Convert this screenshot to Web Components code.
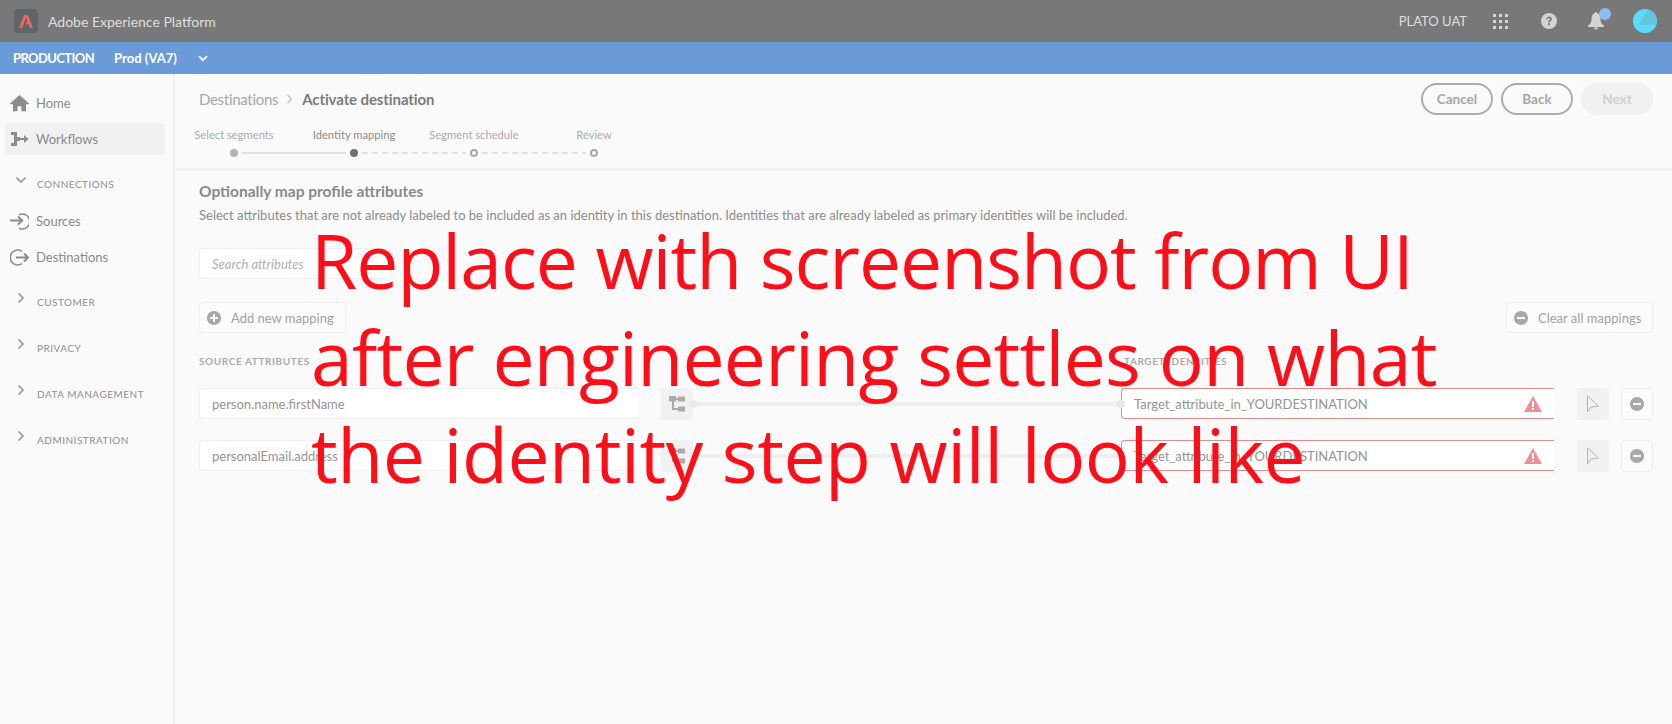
<!DOCTYPE html>
<html lang="en">
<head>
<meta charset="utf-8">
<title>Activate destination</title>
<style>
  html, body { margin: 0; height: 100%; }
  body { font-family: Lato, "Open Sans", sans-serif; background: #fafafa; overflow: hidden; }
</style>
</head>
<body>
<app-shell>
  <top-bar slot="top"></top-bar>
  <env-bar slot="top"></env-bar>
  <side-nav slot="side"></side-nav>
  <activate-page slot="main"></activate-page>
</app-shell>
<note-overlay>
  <div>Replace with screenshot from UI</div>
  <div style="letter-spacing: -.75px">after engineering settles on what</div>
  <div style="letter-spacing: -.45px">the identity step will look like</div>
</note-overlay>

<script>
const ICONS = {
  plus: '<circle cx="9" cy="9" r="8" fill="#a8a8a8"/><path d="M9 4.5v9M4.5 9h9" stroke="#fafafa" stroke-width="2.2"/>',
  minus: '<circle cx="9" cy="9" r="8" fill="#a8a8a8"/><path d="M4.5 9h9" stroke="#fafafa" stroke-width="2.4"/>',
  home: '<path d="M9.5 1 0 9.6c-.2.3 0 .6.3.6H3v7h4.6v-5h3.8v5H16v-7h2.700c.3 0 .5-.3.3-.6z" fill="#8c8c8c"/>',
  workflows: '<path d="M1 2h6v5h3v4H7v5H1v-3h3V5H1z" fill="#8c8c8c"/><path d="M10 8h4V5l4.500 4-4.500 4v-3h-4z" fill="#8c8c8c"/>',
  sources: '<path d="M8 3.200A7.500 7.500 0 1 1 8 16.800" fill="none" stroke="#8c8c8c" stroke-width="1.500" transform="translate(1 -.5)"/><path d="M0 8.500h12M8 4.600l4.200 3.900L8 12.400" fill="none" stroke="#8c8c8c" stroke-width="2"/>',
  destinations: '<path d="M12 3.300A7.500 7.500 0 1 0 12 15.700" fill="none" stroke="#8c8c8c" stroke-width="1.600"/><path d="M6 9.500h12M14 5.600l4.200 3.900-4.200 3.900" fill="none" stroke="#8c8c8c" stroke-width="2"/>'
};

class AppShell extends HTMLElement {
  constructor() {
    super();
    this.shadowDOM = this.attachShadow({ mode: 'open' });
  }

  connectedCallback() {
    this.shadowDOM.innerHTML = `
      <style>
        :host { display: flex; flex-direction: column; height: 724px; width: 1672px; }
        .body { display: flex; flex: 1; min-height: 0; }
        ::slotted([slot="main"]) { flex: 1; min-width: 0; }
      </style>
      <slot name="top"></slot>
      <div class="body">
        <slot name="side"></slot>
        <slot name="main"></slot>
      </div>
    `;
  }
}

class TopBar extends HTMLElement {
  constructor() {
    super();
    this.shadowDOM = this.attachShadow({ mode: 'open' });
  }

  connectedCallback() {
    this.shadowDOM.innerHTML = `
      <style>
        :host {
          display: flex;
          align-items: center;
          height: 42px;
          background: #787878;
          color: #dedede;
          font-size: 14px;
          padding: 0 15px 0 14px;
          box-sizing: border-box;
        }
        .logo {
          width: 24px;
          height: 24px;
          border-radius: 4px;
          background: #5f646b;
          display: flex;
          align-items: center;
          justify-content: center;
          margin-right: 10px;
        }
        .spacer { flex: 1; }
        .org { margin-right: 26px; font-size: 13px; }
        .grid {
          display: grid;
          grid-template-columns: repeat(3, 3px);
          gap: 3px;
          margin-right: 33px;
        }
        .grid i { width: 3px; height: 3px; background: #d4d4d4; }
        .help { margin-right: 31px; display: block; }
        .bell { position: relative; width: 16px; height: 18px; margin-right: 29px; }
        .bell svg { display: block; }
        .dot {
          position: absolute;
          left: 11px;
          top: -4px;
          width: 12px;
          height: 12px;
          border-radius: 50%;
          background: #8dbbf5;
        }
        .avatar { display: block; }
      </style>
      <div class="logo">
        <svg width="14" height="13" viewBox="0 0 14 13"><path d="M5 0h4l5 13h-3.100L9.600 9.300H6.700L8.400 6 7 2.400 3.200 13H0z" fill="#f2645c"/></svg>
      </div>
      <span>Adobe Experience Platform</span>
      <span class="spacer"></span>
      <span class="org">PLATO UAT</span>
      <div class="grid">${'<i></i>'.repeat(9)}</div>
      <svg class="help" width="16" height="16" viewBox="0 0 16 16">
        <circle cx="8" cy="8" r="8" fill="#d4d4d4"/>
        <path d="M5.300 6.200C5.400 4.600 6.500 3.600 8.200 3.600c1.600 0 2.700 1 2.700 2.300 0 2-2.100 2-2.100 3.500H7.100c0-2.300 2-2.300 2-3.400 0-.6-.4-1-1-1-.7 0-1.100.4-1.200 1.200z" fill="#787878"/>
        <rect x="7.100" y="10.300" width="1.800" height="1.900" fill="#787878"/>
      </svg>
      <div class="bell">
        <svg width="16" height="18" viewBox="0 0 16 18">
          <path d="M8 0c.7 0 1 .5 1 1.100C11.500 1.700 12.500 4 12.500 8c0 2.500 1 3.800 3.500 5.500V15H0v-1.500C2.500 11.800 3.500 10.500 3.500 8c0-4 1-6.300 3.500-6.900C7 .5 7.300 0 8 0z" fill="#d4d4d4"/>
          <path d="M6 15.500h4a2 2 0 0 1-4 0z" fill="#d4d4d4"/>
        </svg>
        <span class="dot"></span>
      </div>
      <svg class="avatar" width="24" height="24" viewBox="0 0 24 24">
        <circle cx="12" cy="12" r="12" fill="#5bdcfb"/>
        <path d="M15.300.7 5.300 15.700H23.500A12 12 0 0 0 15.300.7z" fill="#62c5db"/>
      </svg>
    `;
  }
}

class EnvBar extends HTMLElement {
  constructor() {
    super();
    this.shadowDOM = this.attachShadow({ mode: 'open' });
  }

  connectedCallback() {
    this.shadowDOM.innerHTML = `
      <style>
        :host {
          display: flex;
          align-items: center;
          height: 32px;
          background: #6a9bd8;
          color: #fff;
          font-size: 13px;
          font-weight: 700;
          padding-left: 13px;
          box-sizing: border-box;
        }
        .env { letter-spacing: -.6px; }
        .name { margin: 0 21px 0 20px; }
        svg { display: block; }
      </style>
      <span class="env">PRODUCTION</span>
      <span class="name">Prod (VA7)</span>
      <svg width="10" height="7" viewBox="0 0 10 7"><path d="M1 1.200l4 4 4-4" fill="none" stroke="#fff" stroke-width="1.800"/></svg>
    `;
  }
}

class NavItem extends HTMLElement {
  constructor() {
    super();
    this.shadowDOM = this.attachShadow({ mode: 'open' });
  }

  connectedCallback() {
    const icon = ICONS[this.getAttribute('icon')];
    this.shadowDOM.innerHTML = `
      <style>
        :host {
          display: flex;
          align-items: center;
          height: 32px;
          margin: 0 8px 4px 5px;
          padding-left: 5px;
          border-radius: 4px;
          color: #8a8a8a;
          font-size: 13px;
        }
        :host([active]) { background: #f1f1f1; }
        svg { width: 19px; height: 19px; margin-right: 7px; flex: none; }
      </style>
      <svg viewBox="0 0 19 19">${icon}</svg>
      <slot></slot>
    `;
  }
}

class NavGroup extends HTMLElement {
  constructor() {
    super();
    this.shadowDOM = this.attachShadow({ mode: 'open' });
  }

  connectedCallback() {
    const open = this.hasAttribute('open');
    this.shadowDOM.innerHTML = `
      <style>
        :host {
          display: flex;
          align-items: center;
          height: 46px;
          padding-left: 16px;
          color: #8f8f8f;
          font-size: 10px;
          letter-spacing: .5px;
          text-transform: uppercase;
        }
        svg { width: 10px; height: 10px; margin-right: 11px; position: relative; top: -4px; flex: none; }
      </style>
      <svg viewBox="0 0 10 10">
        <path d="${open ? 'M.5 2.500 5 7l4.500-4.500' : 'M2.500.5 7 5l-4.500 4.500'}" fill="none" stroke="#9a9a9a" stroke-width="1.700"/>
      </svg>
      <slot></slot>
    `;
  }
}

class SideNav extends HTMLElement {
  constructor() {
    super();
    this.shadowDOM = this.attachShadow({ mode: 'open' });
  }

  connectedCallback() {
    this.shadowDOM.innerHTML = `
      <style>
        :host {
          display: block;
          flex: none;
          width: 175px;
          box-sizing: border-box;
          border-right: 2px solid #f0f0f0;
          padding-top: 13px;
        }
        .connections { margin-top: 9px; height: 39px; padding-bottom: 2px; }
        .customer { margin-top: 6px; }
      </style>
      <nav-item icon="home">Home</nav-item>
      <nav-item icon="workflows" active>Workflows</nav-item>
      <nav-group class="connections" open>Connections</nav-group>
      <nav-item icon="sources">Sources</nav-item>
      <nav-item icon="destinations">Destinations</nav-item>
      <nav-group class="customer">Customer</nav-group>
      <nav-group>Privacy</nav-group>
      <nav-group>Data management</nav-group>
      <nav-group>Administration</nav-group>
    `;
  }
}

class PillButton extends HTMLElement {
  constructor() {
    super();
    this.shadowDOM = this.attachShadow({ mode: 'open' });
  }

  connectedCallback() {
    this.shadowDOM.innerHTML = `
      <style>
        :host {
          display: flex;
          align-items: center;
          justify-content: center;
          width: 72px;
          height: 32px;
          box-sizing: border-box;
          border: 2px solid #ababab;
          border-radius: 16px;
          color: #a6a6a6;
          font-size: 13.500px;
          font-weight: 700;
        }
        :host([disabled]) { background: #f1f1f1; border-color: #f1f1f1; color: #d0d0d0; }
      </style>
      <slot></slot>
    `;
  }
}

class StepIndicator extends HTMLElement {
  constructor() {
    super();
    this.shadowDOM = this.attachShadow({ mode: 'open' });
  }

  connectedCallback() {
    const steps = ['Select segments', 'Identity mapping', 'Segment schedule', 'Review'];
    this.shadowDOM.innerHTML = `
      <style>
        :host {
          display: grid;
          grid-template-columns: repeat(4, 120px);
          height: 40px;
          font-size: 11.200px;
          color: #aaa;
        }
        .step { position: relative; text-align: center; line-height: 16px; }
        .step.current { color: #8a8a8a; }
        .dot {
          position: absolute;
          left: 56px;
          top: 22px;
          width: 8px;
          height: 8px;
          border-radius: 50%;
          box-sizing: border-box;
          background: #b3b3b3;
        }
        .current .dot { background: #707070; }
        .todo .dot { background: #fafafa; border: 2px solid #a8a8a8; }
        .line {
          position: absolute;
          left: 68px;
          top: 25px;
          width: 104px;
          height: 2px;
          background: #e1e1e1;
        }
        .dash .line {
          background: repeating-linear-gradient(90deg, #e1e1e1 0 6px, transparent 6px 10px);
        }
      </style>
      ${steps.map((s, i) => `
        <div class="step ${i === 1 ? 'current' : ''} ${i > 1 ? 'todo' : ''} ${i > 0 ? 'dash' : ''}">
          ${s}<span class="dot"></span>${i < 3 ? '<span class="line"></span>' : ''}
        </div>`).join('')}
    `;
  }
}

class ToolButton extends HTMLElement {
  constructor() {
    super();
    this.shadowDOM = this.attachShadow({ mode: 'open' });
  }

  connectedCallback() {
    this.shadowDOM.innerHTML = `
      <style>
        :host {
          display: flex;
          align-items: center;
          gap: 9px;
          height: 31px;
          width: 147px;
          padding-left: 6px;
          box-sizing: border-box;
          background: #fbfbfb;
          border: 1px solid #ededed;
          border-radius: 4px;
          color: #a2a2a2;
          font-size: 13px;
        }
        svg { width: 16px; height: 16px; flex: none; }
      </style>
      <svg viewBox="0 0 18 18">${ICONS[this.getAttribute('icon')]}</svg>
      <slot></slot>
    `;
  }
}

class MappingRow extends HTMLElement {
  constructor() {
    super();
    this.shadowDOM = this.attachShadow({ mode: 'open' });
  }

  connectedCallback() {
    const source = this.getAttribute('source');
    const target = this.getAttribute('target');
    this.shadowDOM.innerHTML = `
      <style>
        :host {
          display: grid;
          grid-template-columns: 439px 23px 32px 428px 433px 23px 32px 12px 32px;
          height: 32px;
          font-size: 13px;
          color: #949494;
        }
        .source, .target {
          display: flex;
          align-items: center;
          height: 31px;
          background: #fff;
          box-sizing: border-box;
          border: 1px solid #eee;
          border-right: 0;
          border-radius: 4px 0 0 4px;
          padding-left: 12px;
        }
        .target { grid-column: 5; border-color: #e68a8a; justify-content: space-between; padding-right: 12px; }
        .box {
          display: flex;
          align-items: center;
          justify-content: center;
          box-sizing: border-box;
          background: #f1f1f1;
          border-radius: 0 4px 4px 0;
        }
        .map { grid-column: 3; }
        .link { grid-column: 4; position: relative; }
        .link::before {
          content: "";
          position: absolute;
          left: 0; right: 0; top: 14px;
          height: 4px;
          background: #eee;
        }
        .link i {
          position: absolute;
          top: 12px;
          width: 8px;
          height: 8px;
          border-radius: 50%;
          background: #e8e8e8;
        }
        .link .l { left: -4px; }
        .link .r { right: -4px; }
        .cursor { grid-column: 7; }
        .remove {
          grid-column: 9;
          background: #fbfbfb;
          border: 1px solid #ededed;
          border-radius: 4px;
        }
        svg { display: block; }
      </style>
      <div class="source">${source}</div>
      <div class="box map">
        <svg width="16" height="16" viewBox="0 0 16 16" fill="#ababab">
          <rect x="0" y="0" width="7" height="5.500"/><rect x="9" y=".5" width="7" height="5"/>
          <rect x="9" y="10.500" width="7" height="5"/>
          <path d="M3 5h2v7h4v2H3zM7 2h2v2H7z"/>
        </svg>
      </div>
      <div class="link"><i class="l"></i><i class="r"></i></div>
      <div class="target">
        <span>${target}</span>
        <svg width="18" height="16" viewBox="0 0 18 16">
          <path d="M9 0 18 16H0z" fill="#ee8f96"/>
          <rect x="8" y="5" width="2" height="6" fill="#fff"/><rect x="8" y="12" width="2" height="2" fill="#fff"/>
        </svg>
      </div>
      <div class="box cursor">
        <svg width="14" height="18" viewBox="0 0 14 18">
          <path d="M1.500 1v16l3.500-5 7.500-1z" fill="none" stroke="#b4b4b4" stroke-width="1"/>
        </svg>
      </div>
      <div class="box remove">
        <svg width="16" height="16" viewBox="0 0 18 18">${ICONS.minus}</svg>
      </div>
    `;
  }
}

class ActivatePage extends HTMLElement {
  constructor() {
    super();
    this.shadowDOM = this.attachShadow({ mode: 'open' });
  }

  connectedCallback() {
    this.shadowDOM.innerHTML = `
      <style>
        :host { display: block; color: #8a8a8a; }
        header {
          height: 97px;
          box-sizing: border-box;
          padding-top: 9px;
          border-bottom: 3px solid #f1f1f1;
          position: relative;
        }
        .crumbs {
          display: flex;
          align-items: center;
          gap: 8px;
          height: 32px;
          margin-left: 24px;
          font-size: 15px;
          color: #a8a8a8;
        }
        .crumbs span { letter-spacing: -.3px; }
        .crumbs b { color: #7c7c7c; font-weight: 700; letter-spacing: -.1px; }
        .actions {
          position: absolute;
          top: 9px;
          right: 19px;
          display: flex;
          gap: 8px;
        }
        step-indicator { margin: 12px 0 0 -1px; }
        section { padding: 10px 19px 0 24px; }
        h2 { margin: 0; font-size: 15.500px; line-height: 20px; color: #8a8a8a; font-weight: 700; }
        p { margin: 4px 0 0; font-size: 13px; line-height: 20px; color: #8c8c8c; }
        .search {
          display: flex;
          align-items: center;
          width: 192px;
          height: 31px;
          margin-top: 23px;
          padding-left: 12px;
          box-sizing: border-box;
          background: #fff;
          border: 1px solid #eee;
          border-radius: 4px;
          font-size: 13px;
          font-style: italic;
          color: #b0b0b0;
        }
        .tools { display: flex; justify-content: space-between; margin-top: 23px; }
        .labels {
          display: grid;
          grid-template-columns: 925px 1fr;
          margin-top: 20px;
          font-size: 10px;
          font-weight: 700;
          letter-spacing: .6px;
          line-height: 16px;
          color: #ababab;
        }
        mapping-row { margin-top: 20px; }
        .labels + mapping-row { margin-top: 19px; }
      </style>
      <header>
        <div class="crumbs">
          <span>Destinations</span>
          <svg width="8" height="10" viewBox="0 0 8 10"><path d="M1.500 1l4 4-4 4" fill="none" stroke="#bdbdbd" stroke-width="1.100"/></svg>
          <b>Activate destination</b>
        </div>
        <div class="actions">
          <pill-button>Cancel</pill-button>
          <pill-button>Back</pill-button>
          <pill-button disabled>Next</pill-button>
        </div>
        <step-indicator></step-indicator>
      </header>
      <section>
        <h2>Optionally map profile attributes</h2>
        <p>Select attributes that are not already labeled to be included as an identity in this destination. Identities that are already labeled as primary identities will be included.</p>
        <div class="search">Search attributes</div>
        <div class="tools">
          <tool-button icon="plus">Add new mapping</tool-button>
          <tool-button icon="minus">Clear all mappings</tool-button>
        </div>
        <div class="labels"><span>SOURCE ATTRIBUTES</span><span>TARGET IDENTITIES</span></div>
        <mapping-row source="person.name.firstName" target="Target_attribute_in_YOURDESTINATION"></mapping-row>
        <mapping-row source="personalEmail.address" target="Target_attribute_in_YOURDESTINATION"></mapping-row>
      </section>
    `;
  }
}

class NoteOverlay extends HTMLElement {
  constructor() {
    super();
    this.shadowDOM = this.attachShadow({ mode: 'open' });
  }

  connectedCallback() {
    this.shadowDOM.innerHTML = `
      <style>
        :host {
          position: absolute;
          left: 311px;
          top: 212px;
          color: #ff0d19;
          font-family: "Open Sans", sans-serif;
          font-size: 75px;
          letter-spacing: -1px;
          line-height: 97px;
          white-space: nowrap;
        }
      </style>
      <slot></slot>
    `;
  }
}

customElements.define('app-shell', AppShell);
customElements.define('top-bar', TopBar);
customElements.define('env-bar', EnvBar);
customElements.define('nav-item', NavItem);
customElements.define('nav-group', NavGroup);
customElements.define('side-nav', SideNav);
customElements.define('pill-button', PillButton);
customElements.define('step-indicator', StepIndicator);
customElements.define('tool-button', ToolButton);
customElements.define('mapping-row', MappingRow);
customElements.define('activate-page', ActivatePage);
customElements.define('note-overlay', NoteOverlay);
</script>
</body>
</html>
